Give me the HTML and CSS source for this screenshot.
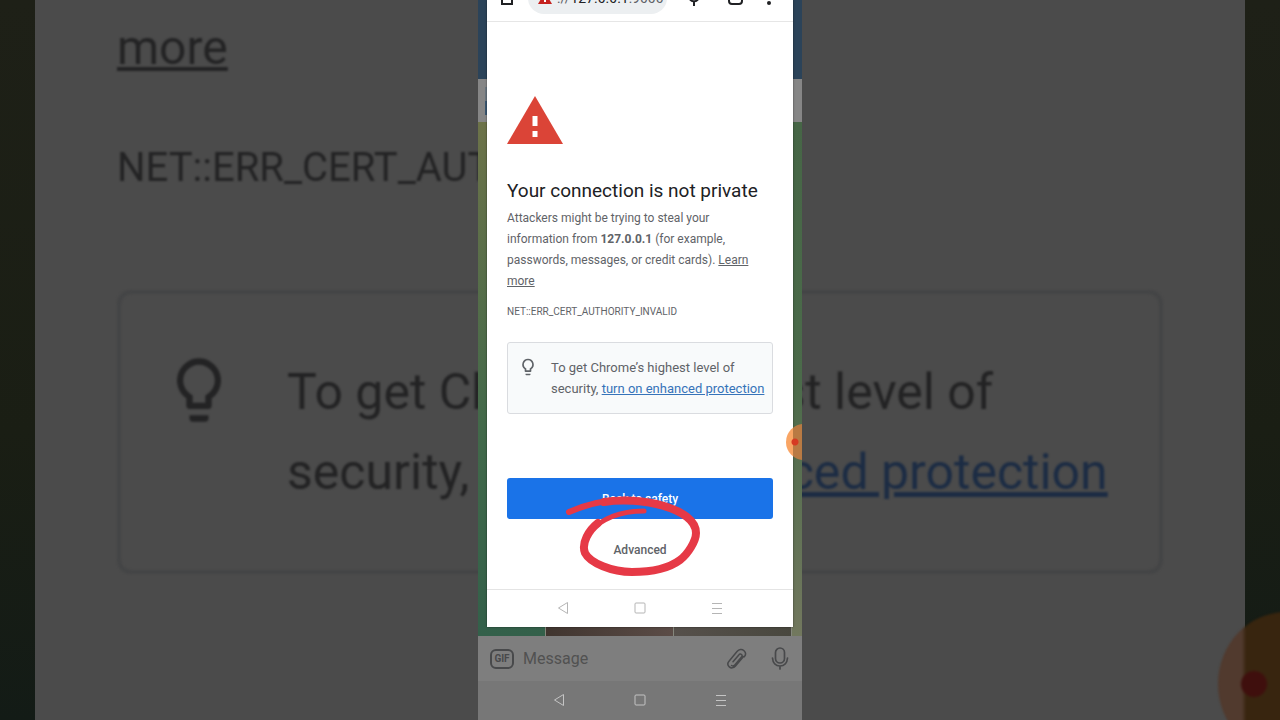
FILE: index.html
```html
<!DOCTYPE html>
<html lang="en">
  <head>
    <meta charset="UTF-8" />
    <meta name="viewport" content="width=device-width, initial-scale=1.0" />
    <title>Privacy error</title>
    <link rel="stylesheet" href="styles.css" />
  </head>
  <body>
    <div class="stage">
      <!-- enlarged backdrop -->
      <div class="backdrop" aria-hidden="true">
        <div class="backdrop-page">
          <p class="backdrop-more">more</p>
          <p class="backdrop-code">NET::ERR_CERT_AUTHORITY_INVALID</p>
          <div class="backdrop-tip">
            <svg class="backdrop-bulb" viewBox="0 0 24 24">
              <path fill="currentColor" d="M9 21c0 .6.4 1 1 1h4c.6 0 1-.4 1-1v-1H9v1zm3-19a7 7 0 0 0-4 12.700V17c0 .6.4 1 1 1h6c.6 0 1-.4 1-1v-2.300A7 7 0 0 0 12 2zm2.900 11.100-.9.600V16h-4v-2.300l-.9-.600A5 5 0 1 1 14.900 13.100z" />
            </svg>
            <p>To get Chrome’s highest level of<br />security, <span class="backdrop-link">turn on enhanced protection</span></p>
          </div>
        </div>
        <span class="backdrop-bubble"></span>
      </div>

      <!-- phone -->
      <main class="phone">
        <div class="chat-header"></div>
        <div class="chat-pinned"><span class="pinned-mark"></span></div>
        <div class="chat-body">
          <div class="chat-media">
            <span class="media-item"></span>
            <span class="media-item"></span>
          </div>
        </div>
        <div class="message-bar">
          <button class="icon-btn" aria-label="GIF">
            <span class="gif-badge">GIF</span>
          </button>
          <input class="message-input" type="text" placeholder="Message" aria-label="Message" />
          <button class="icon-btn" aria-label="Attach">
            <svg width="22" height="22" viewBox="0 0 22 22" fill="none" stroke="currentColor" stroke-width="1.500" stroke-linecap="round">
              <path d="M17.500 8.500 9.300 18.200c-1.700 2-4.300 2.200-6 .7s-1.800-4-.1-6L11 3.600c2-2.400 5-2.700 7-.9s2 4 .3 6.100M7 13.800l5.800-6.900c.8-1 2-1 2.700-.4s.8 1.600 0 2.600l-6.700 7.800c-1 1.200-2.300 1.300-3.200.6" />
            </svg>
          </button>
          <button class="icon-btn mic-btn" aria-label="Record voice">
            <svg width="18" height="24" viewBox="0 0 18 24" fill="none" stroke="currentColor" stroke-width="1.700" stroke-linecap="round">
              <rect x="4.500" y="1" width="9" height="15" rx="4.500" />
              <path d="M1.500 11c.3 5 3.300 8 7.500 8s7.200-3 7.500-8M9 19v3" />
            </svg>
          </button>
        </div>
        <nav class="nav-bar nav-outer" aria-label="System">
          <button class="icon-btn" aria-label="Back"><svg width="12" height="14" viewBox="0 0 12 14"><path d="M10.500 1.500v11L1.500 7z" /></svg></button>
          <button class="icon-btn" aria-label="Home"><svg width="12" height="14" viewBox="0 0 12 14"><rect x="1" y="2" width="10" height="10" rx="1" /></svg></button>
          <button class="icon-btn" aria-label="Recent"><svg width="12" height="14" viewBox="0 0 12 14"><path d="M1 2.500h10M1 7.500h10M1 12.500h10" /></svg></button>
        </nav>

        <!-- browser window over the chat -->
        <section class="browser">
          <header class="toolbar">
            <button class="icon-btn" aria-label="Home page">
              <svg width="14" height="14" viewBox="0 0 14 14" fill="none" stroke="currentColor" stroke-width="2"><path d="M2 5.500 7 1.500l5 4V13H2z" /></svg>
            </button>
            <div class="address">
              <svg width="14" height="12" viewBox="0 0 14 12"><path fill="#c5221f" d="M7 0l7 12H0z" /><path fill="#fff" d="M6 4h2v3H6zm0 4h2v2H6z" /></svg>
              <span>://<b>127.0.0.1</b>:9000</span>
            </div>
            <button class="icon-btn" aria-label="Voice search">
              <svg width="14" height="16" viewBox="0 0 14 16" fill="none" stroke="currentColor" stroke-width="2"><rect x="5" y="1" width="4" height="7" rx="2" /><path d="M2 6c0 7 10 7 10 0M7 11v5" /></svg>
            </button>
            <button class="icon-btn" aria-label="Tabs"><span class="tab-count">37</span></button>
            <button class="icon-btn" aria-label="Menu">
              <svg width="4" height="14" viewBox="0 0 4 14" fill="currentColor"><circle cx="2" cy="2" r="2" /><circle cx="2" cy="7" r="2" /><circle cx="2" cy="12" r="2" /></svg>
            </button>
          </header>
          <div class="warning">
            <svg class="warning-icon" width="56" height="48" viewBox="0 0 56 48">
              <path fill="#db4437" d="M28 0l28 48H0z" />
              <path fill="#fff" d="M25.500 20h5v10h-5zm0 15h5v6h-5z" />
            </svg>
            <h1>Your connection is not private</h1>
            <p class="warning-text">Attackers might be trying to steal your information from <strong>127.0.0.1</strong> (for example, passwords, messages, or credit cards). <a href="#">Learn more</a></p>
            <p class="error-code">NET::ERR_CERT_AUTHORITY_INVALID</p>
            <div class="tip">
              <svg class="tip-icon" width="20" height="20" viewBox="0 0 24 24">
                <path fill="currentColor" d="M9 21c0 .6.4 1 1 1h4c.6 0 1-.4 1-1v-1H9v1zm3-19a7 7 0 0 0-4 12.700V17c0 .6.4 1 1 1h6c.6 0 1-.4 1-1v-2.300A7 7 0 0 0 12 2zm2.900 11.100-.9.600V16h-4v-2.300l-.9-.600A5 5 0 1 1 14.900 13.100z" />
              </svg>
              <p>To get Chrome’s highest level of security, <a href="#">turn on enhanced protection</a></p>
            </div>
            <div class="actions">
              <button class="safety-btn">Back to safety</button>
              <button class="advanced-btn">Advanced</button>
              <!-- hand drawn ring -->
              <svg class="ring" width="140" height="84" viewBox="562 494 140 84" fill="none" stroke="#e63946" stroke-linecap="round" stroke-linejoin="round">
                <path stroke-width="6" d="M569 512C590 503 612 499 632 500" />
                <path stroke-width="8" d="M604 502C640 496 696 508 696 533C696 541 688 554 680 560C668 569 650 572 632 572C612 572 590 563 585 553C581 543 589 530 598 523" />
                <path stroke-width="5" d="M588 533C602 518 622 511 644 511" />
              </svg>
            </div>
          </div>
          <nav class="nav-bar nav-inner" aria-label="Browser system">
            <button class="icon-btn" aria-label="Back"><svg width="12" height="14" viewBox="0 0 12 14"><path d="M10.500 1.500v11L1.500 7z" /></svg></button>
            <button class="icon-btn" aria-label="Home"><svg width="12" height="14" viewBox="0 0 12 14"><rect x="1" y="2" width="10" height="10" rx="1" /></svg></button>
            <button class="icon-btn" aria-label="Recent"><svg width="12" height="14" viewBox="0 0 12 14"><path d="M1 2.500h10M1 7.500h10M1 12.500h10" /></svg></button>
          </nav>
        </section>
        <span class="bubble"></span>
      </main>
    </div>
  </body>
</html>
```
FILE: styles.css
```css
/*global*/
* {
  margin: 0;
  padding: 0;
  box-sizing: border-box;
}

body {
  font-family: Roboto, "Liberation Sans", sans-serif;
  background-color: #181d16;
}

button,
input {
  font-family: inherit;
  border: none;
  background: none;
}

/*common*/
.icon-btn {
  display: flex;
  align-items: center;
  justify-content: center;
  color: inherit;
}

.stage {
  display: grid;
  justify-items: center;
  height: 100vh;
  overflow: hidden;
}

.stage > * {
  grid-area: 1 / 1;
}

/*backdrop*/
.backdrop {
  position: relative;
  width: 100%;
  height: 100vh;
  padding: 0 35px;
  overflow: hidden;
  background: linear-gradient(#1e2017, #1a1e14 60%, #131b16);
}

.backdrop-page {
  height: 100%;
  padding: 8px 82px;
  background-color: #4b4b4b;
  color: #232324;
  font-size: 50px;
  line-height: 80px;
  white-space: nowrap;
}

.backdrop-page > * {
  filter: blur(1px);
}

.backdrop-more {
  font-size: 48px;
  text-decoration: underline;
}

.backdrop-code {
  margin-top: 40px;
  font-size: 40px;
}

.backdrop-tip {
  display: flex;
  height: 284px;
  margin-top: 82px;
  padding: 58px 48px;
  border: 4px solid #444546;
  border-radius: 14px;
}

.backdrop-bulb {
  flex: none;
  width: 76px;
  height: 76px;
  margin: 0 50px 0 -8px;
}

.backdrop-link {
  color: #1c2c44;
  text-decoration: underline;
}

.backdrop-bubble {
  position: absolute;
  right: -74px;
  bottom: -36px;
  width: 136px;
  height: 144px;
  border-radius: 50%;
  background: radial-gradient(circle at 36px 72px, #3f0f0d 12px, transparent 14px), linear-gradient(90deg, #513a2e 24px, #38250f 28px);
  filter: blur(1px);
}

/*phone*/
.phone {
  position: relative;
  display: flex;
  flex-direction: column;
  width: 324px;
  height: 100vh;
  overflow: hidden;
}

.chat-header {
  height: 79px;
  background-color: #2b4359;
}

.chat-pinned {
  display: flex;
  align-items: center;
  height: 43px;
  padding-left: 7px;
  background-color: #868686;
}

.pinned-mark {
  width: 2px;
  height: 28px;
  background: linear-gradient(#6c7881 50%, #3b5872 50%);
}

.chat-body {
  flex: 1;
  display: flex;
  align-items: flex-end;
  padding: 0 10px 0 67px;
  background: linear-gradient(#6d7349, #42694a 60%, #33604a) left / 50% 100% no-repeat,
    linear-gradient(#466646, #4b6b4a 50%, #72785e) right / 50% 100% no-repeat;
}

.chat-media {
  display: flex;
  gap: 1px;
  flex: 1;
  height: 12px;
  padding: 0 1px;
  background-color: #85877c;
}

.media-item {
  flex: 14;
  background: linear-gradient(90deg, #40352f, #5b4c47);
}

.media-item + .media-item {
  flex: 13;
  background: linear-gradient(90deg, #56504b, #49483f);
}

.message-bar {
  display: flex;
  align-items: center;
  height: 45px;
  padding: 0 13px 0 12px;
  background-color: #7e7e7e;
  color: #48494b;
}

.gif-badge {
  width: 24px;
  border: 2px solid;
  border-radius: 6px;
  font-size: 10px;
  font-weight: 700;
  line-height: 16px;
}

.message-input {
  flex: 1;
  min-width: 0;
  margin-left: 9px;
  font-size: 16px;
}

.message-input::placeholder {
  color: #515151;
  opacity: 1;
}

.mic-btn {
  margin-left: 23px;
}

/*system navigation*/
.nav-bar {
  display: flex;
  align-items: center;
  justify-content: space-between;
}

.nav-bar svg {
  fill: none;
  stroke: currentColor;
}

.nav-outer {
  height: 39px;
  padding: 0 75px 2px;
  background-color: #777;
  color: #c4c4c4;
}

.nav-inner {
  height: 38px;
  padding: 0 70px 2px;
  border-top: 1px solid #e4e4e4;
  color: #b5b5b5;
}

/*browser*/
.browser {
  position: absolute;
  top: 0;
  left: 9px;
  right: 9px;
  background-color: #fff;
  box-shadow: 0 0 2px rgba(0, 0, 0, 0.5);
}

.toolbar {
  display: flex;
  align-items: center;
  height: 48px;
  margin-top: -26px;
  padding: 0 20px 0 13px;
  border-bottom: 1px solid #e6e6e6;
  color: #202124;
}

.address {
  display: flex;
  align-items: center;
  gap: 5px;
  width: 139px;
  height: 32px;
  margin: 0 20px 0 14px;
  padding-left: 10px;
  border-radius: 16px;
  background-color: #eceff1;
  color: #5f6368;
  font-size: 14px;
}

.address b {
  color: #202124;
  font-weight: 400;
}

.tab-count {
  width: 15px;
  margin: 0 24px 0 27px;
  border: 2px solid;
  border-radius: 4px;
  font-size: 7px;
  line-height: 10px;
}

/*warning*/
.warning {
  padding: 74px 20px 18px;
  color: #5f6368;
  font-size: 13px;
  line-height: 21px;
}

.warning-icon {
  display: block;
}

.warning h1 {
  margin-top: 35px;
  color: #202124;
  font-size: 19px;
  font-weight: 400;
  line-height: 24px;
  white-space: nowrap;
}

.warning-text {
  margin-top: 5px;
  font-size: 12px;
}

.warning-text a {
  color: inherit;
}

.error-code {
  margin-top: 9px;
  font-size: 10px;
}

.tip {
  display: flex;
  height: 72px;
  margin-top: 20px;
  padding: 14px 6px 14px 10px;
  border: 1px solid #dadce0;
  border-radius: 3px;
  background-color: #f8fafb;
}

.tip-icon {
  flex: none;
  margin-right: 13px;
}

.tip a {
  color: #3673b9;
}

.actions {
  position: relative;
  display: flex;
  flex-direction: column;
  align-items: center;
  margin-top: 64px;
}

.safety-btn {
  width: 100%;
  height: 41px;
  border-radius: 3px;
  background-color: #1a73e8;
  color: #fff;
  font-size: 12px;
  font-weight: 500;
}

.advanced-btn {
  height: 42px;
  margin-top: 10px;
  color: #5f6368;
  font-size: 12px;
  font-weight: 500;
}

.ring {
  position: absolute;
  top: 16px;
  left: 55px;
}

/*floating bubble*/
.bubble {
  position: absolute;
  top: 424px;
  right: -20px;
  width: 36px;
  height: 36px;
  border-radius: 50%;
  background: radial-gradient(circle at 9px 18px, #d63a22 3px, transparent 4px), linear-gradient(90deg, #f9a564 7px, #b97a43 7px);
}
```
